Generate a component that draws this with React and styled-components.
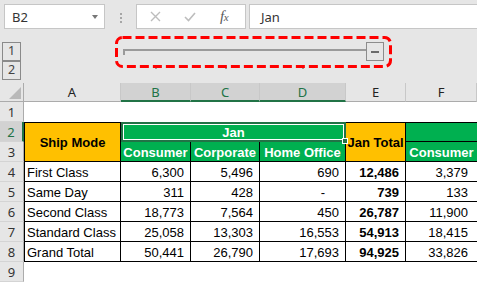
import React from 'react';
import styled, { createGlobalStyle } from 'styled-components';

const GlobalStyle = createGlobalStyle`
  html, body { margin: 0; padding: 0; background: #e6e6e6; }
  * { box-sizing: border-box; }
`;

const COLS = '24px 97px 70px 69px 86px 60px 71px';
const ORANGE = '#ffc000';
const GREEN = '#00b050';
const XL = '#217346';

const Page = styled.div`
  width: 477px;
  height: 282px;
  overflow: hidden;
  background: #e6e6e6;
  display: flex;
  flex-direction: column;
  font-family: "Noto Sans", "Open Sans", sans-serif;
`;

/* ---------- formula bar ---------- */
const FormulaBar = styled.div`
  height: 33px;
  flex: none;
  display: flex;
  align-items: flex-start;
  padding: 4px 0 0 4px;
`;

const Field = styled.div`
  height: 25px;
  background: #fff;
  border: 1px solid #c6c6c6;
  display: flex;
  align-items: center;
  font-size: 13px;
  color: #333;
`;

const NameBox = styled(Field)`
  width: 101px;
  padding: 0 6px 0 7px;
  justify-content: space-between;
`;

const DropArrow = styled.span`
  width: 0;
  height: 0;
  border-left: 3.5px solid transparent;
  border-right: 3.5px solid transparent;
  border-top: 4px solid #777;
`;

const Grip = styled.div`
  margin: 9px 0 0 15px;
  display: flex;
  flex-direction: column;
  gap: 2px;
`;

const GripDot = styled.span`
  width: 2px;
  height: 2px;
  background: #a6a6a6;
`;

const Tools = styled(Field)`
  width: 110px;
  margin-left: 14px;
  padding-left: 13px;
  gap: 0;
`;

const ToolIcon = styled.svg`
  flex: none;
  margin-right: ${(p) => p.$mr || 0}px;
`;

const Fx = styled.span`
  font-family: "Liberation Serif", "DejaVu Serif", serif;
  font-style: italic;
  color: #5a5a5a;
  font-size: 15px;
  line-height: 1;
  letter-spacing: -0.5px;
  & > span { font-size: 11px; }
`;

const FormulaInput = styled(Field)`
  flex: 1;
  margin-left: 3px;
  margin-right: -4px;
  padding-left: 11px;
`;

/* ---------- outline area ---------- */
const OutlineArea = styled.div`
  position: relative;
  height: 50px;
  flex: none;
  display: grid;
  grid-template-columns: ${COLS};
  grid-template-rows: 50px;
`;

const LevelStack = styled.div`
  grid-column: 1;
  grid-row: 1;
  align-self: start;
  margin: 9px 0 0 2px;
  width: 19px;
  display: flex;
  flex-direction: column;
`;

const LevelButton = styled.div`
  height: 19px;
  border: 1px solid #8a8a8a;
  display: flex;
  align-items: center;
  justify-content: center;
  font-size: 12.5px;
  color: #444;
  line-height: 1;
`;

const Bracket = styled.div`
  grid-column: 3 / 7;
  grid-row: 1;
  align-self: start;
  margin-top: 9px;
  height: 19px;
  display: flex;
  padding: 0 22px 0 2px;
`;

const GroupLine = styled.div`
  flex: 1;
  margin-top: 7px;
  height: 6px;
  border-top: 2px solid #9a9a9a;
  border-left: 2px solid #9a9a9a;
`;

const CollapseButton = styled.div`
  width: 18px;
  height: 19px;
  border: 1px solid #8c8c8c;
  display: flex;
  align-items: center;
  justify-content: center;
`;

const Minus = styled.span`
  width: 8px;
  height: 2px;
  background: #6b6b6b;
`;

const LevelDot = styled.span`
  grid-column: ${(p) => p.$col};
  grid-row: 1;
  justify-self: center;
  align-self: start;
  margin-top: 34px;
  width: 2px;
  height: 2px;
  background: #999;
`;

const Annotation = styled.svg`
  position: absolute;
  left: 115px;
  top: 3px;
  pointer-events: none;
`;

/* ---------- sheet ---------- */
const Sheet = styled.div`
  display: grid;
  grid-template-columns: ${COLS};
  grid-template-rows: 19px repeat(9, 20px);
  background: #fff;
  font-family: "Liberation Sans", Arial, sans-serif;
  font-size: 13px;
`;

const Corner = styled.div`
  background: #e6e6e6;
  border-right: 1px solid #ababab;
  border-bottom: 1px solid #ababab;
  display: flex;
  align-items: flex-end;
  justify-content: flex-end;
  padding: 0 2px 2px 0;
`;

const CornerTriangle = styled.span`
  width: 0;
  height: 0;
  border-style: solid;
  border-width: 0 0 12px 12px;
  border-color: transparent transparent #b9b9b9 transparent;
`;

const ColHeader = styled.div`
  background: ${(p) => (p.$sel ? '#d2d2d2' : '#e6e6e6')};
  border-right: 1px solid #c8c8c8;
  border-bottom: ${(p) => (p.$sel ? `2px solid ${XL}` : '1px solid #ababab')};
  color: ${(p) => (p.$sel ? XL : '#222')};
  display: flex;
  align-items: center;
  justify-content: center;
  font-family: "Noto Sans", sans-serif;
  font-size: 13px;
  padding-top: ${(p) => (p.$sel ? 1 : 0)}px;
`;

const RowHeader = styled.div`
  background: ${(p) => (p.$sel ? '#d2d2d2' : '#e6e6e6')};
  border-right: ${(p) => (p.$sel ? `2px solid ${XL}` : '1px solid #ababab')};
  border-bottom: 1px solid #d4d4d4;
  color: ${(p) => (p.$sel ? XL : '#333')};
  display: flex;
  align-items: center;
  justify-content: center;
  font-family: "Noto Sans", sans-serif;
  font-size: 13px;
  padding-top: 1px;
`;

const Blank = styled.div`
  background: #fff;
`;

const Cell = styled.div`
  grid-column: ${(p) => (p.$span ? `span ${p.$span}` : 'auto')};
  grid-row: ${(p) => (p.$rows ? `span ${p.$rows}` : 'auto')};
  background: ${(p) => p.$bg || '#fff'};
  color: ${(p) => p.$color || '#000'};
  font-weight: ${(p) => (p.$bold ? 700 : 400)};
  display: flex;
  align-items: center;
  justify-content: ${(p) =>
    p.$align === 'right' ? 'flex-end' : p.$align === 'center' ? 'center' : 'flex-start'};
  padding: 1px ${(p) => p.$pr ?? 6}px 0 2px;
  border-top: ${(p) => (p.$top ? '1px solid #000' : 'none')};
  border-left: ${(p) => (p.$left ? '1px solid #000' : 'none')};
  border-right: ${(p) => (p.$open ? 'none' : '1px solid #000')};
  border-bottom: 1px solid #000;
  white-space: nowrap;
`;

const SelectedCell = styled(Cell)`
  position: relative;
  border: 2px solid ${XL};
  box-shadow: inset 0 0 0 1px #fff;
  padding: 0;
`;

const FillHandle = styled.span`
  position: absolute;
  right: -4px;
  bottom: -4px;
  width: 6px;
  height: 6px;
  background: ${XL};
  border: 1px solid #fff;
  z-index: 2;
`;

const data = [
  ['First Class', '6,300', '5,496', '690', '12,486', '3,379'],
  ['Same Day', '311', '428', '-', '739', '133'],
  ['Second Class', '18,773', '7,564', '450', '26,787', '11,900'],
  ['Standard Class', '25,058', '13,303', '16,553', '54,913', '18,415'],
  ['Grand Total', '50,441', '26,790', '17,693', '94,925', '33,826'],
];

const columns = ['A', 'B', 'C', 'D', 'E', 'F'];

export default function App() {
  return (
    <Page>
      <GlobalStyle />
      <FormulaBar>
        <NameBox>
          <span>B2</span>
          <DropArrow />
        </NameBox>
        <Grip>
          <GripDot />
          <GripDot />
          <GripDot />
        </Grip>
        <Tools>
          <ToolIcon width="11" height="11" viewBox="0 0 11 11" $mr={23}>
            <path d="M1 1 L10 10 M10 1 L1 10" stroke="#bdbdbd" strokeWidth="1.4" fill="none" />
          </ToolIcon>
          <ToolIcon width="12" height="11" viewBox="0 0 12 11" $mr={24}>
            <path d="M1 6 L4.5 9.5 L11 2" stroke="#bdbdbd" strokeWidth="1.6" fill="none" />
          </ToolIcon>
          <Fx>
            f<span>x</span>
          </Fx>
        </Tools>
        <FormulaInput>Jan</FormulaInput>
      </FormulaBar>

      <OutlineArea>
        <LevelStack>
          <LevelButton>1</LevelButton>
          <LevelButton>2</LevelButton>
        </LevelStack>
        <Bracket>
          <GroupLine />
          <CollapseButton>
            <Minus />
          </CollapseButton>
        </Bracket>
        <LevelDot $col={3} />
        <LevelDot $col={4} />
        <LevelDot $col={5} />
        <Annotation width="277" height="32" viewBox="0 0 277 32">
          <rect
            x="1.5"
            y="1.5"
            width="274"
            height="29"
            rx="6"
            fill="none"
            stroke="#ff0000"
            strokeWidth="3"
            strokeDasharray="9 4"
          />
        </Annotation>
      </OutlineArea>

      <Sheet>
        <Corner>
          <CornerTriangle />
        </Corner>
        {columns.map((c) => (
          <ColHeader key={c} $sel={c === 'B' || c === 'C' || c === 'D'}>
            {c}
          </ColHeader>
        ))}

        <RowHeader>1</RowHeader>
        {columns.map((c) => (
          <Blank key={`r1${c}`} />
        ))}

        <RowHeader $sel>2</RowHeader>
        <Cell $rows={2} $bg={ORANGE} $bold $align="center" $top $left $pr={2}>
          Ship Mode
        </Cell>
        <SelectedCell $span={3} $bg={GREEN} $color="#fff" $bold $align="center">
          Jan
          <FillHandle />
        </SelectedCell>
        <Cell $rows={2} $bg={ORANGE} $bold $align="center" $top $pr={2}>
          Jan Total
        </Cell>
        <Cell $bg={GREEN} $top $open />

        <RowHeader>3</RowHeader>
        <Cell $bg={GREEN} $color="#fff" $bold $align="center" $pr={2}>
          Consumer
        </Cell>
        <Cell $bg={GREEN} $color="#fff" $bold $align="center" $pr={2}>
          Corporate
        </Cell>
        <Cell $bg={GREEN} $color="#fff" $bold $align="center" $pr={2}>
          Home Office
        </Cell>
        <Cell $bg={GREEN} $color="#fff" $bold $align="center" $open $pr={2}>
          Consumer
        </Cell>

        {data.map((row, i) => (
          <React.Fragment key={row[0]}>
            <RowHeader>{i + 4}</RowHeader>
            <Cell $left>{row[0]}</Cell>
            <Cell $align="right">{row[1]}</Cell>
            <Cell $align="right">{row[2]}</Cell>
            <Cell $align="right" $pr={row[3] === '-' ? 20 : 6}>
              {row[3]}
            </Cell>
            <Cell $align="right" $bold>
              {row[4]}
            </Cell>
            <Cell $align="right" $open $pr={9}>
              {row[5]}
            </Cell>
          </React.Fragment>
        ))}

        <RowHeader>9</RowHeader>
        {columns.map((c) => (
          <Blank key={`r9${c}`} />
        ))}
      </Sheet>
    </Page>
  );
}
